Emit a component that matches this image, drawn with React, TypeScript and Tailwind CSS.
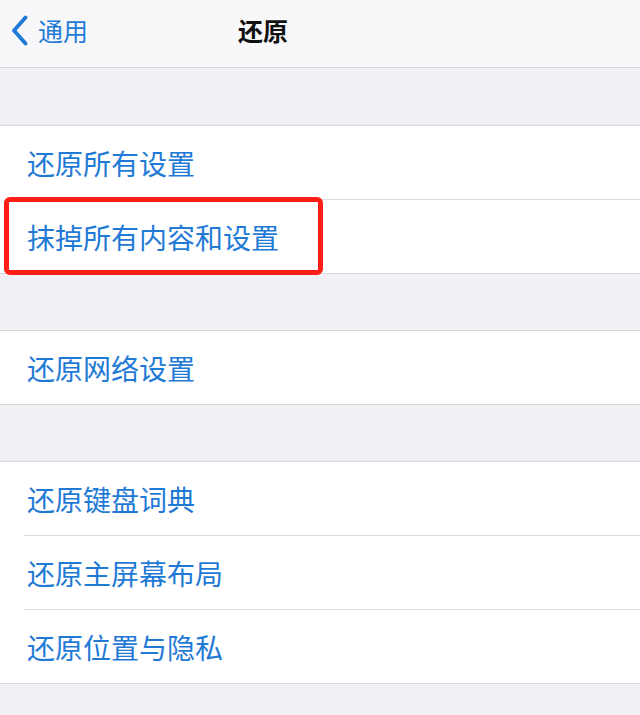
import React from 'react';

const groups: string[][] = [
  ['还原所有设置', '抹掉所有内容和设置'],
  ['还原网络设置'],
  ['还原键盘词典', '还原主屏幕布局', '还原位置与隐私'],
];

const Row = ({ label, marked }: { label: string; marked?: boolean }) => (
  <div className="relative h-[73px] flex items-center pl-[27px] text-[28px] text-[#1f7ad6] leading-none">
    <span>{label}</span>
    {marked && (
      <div className="absolute left-[4px] top-[-3px] w-[319px] h-[78px] border-[5px] border-[#ff1d17] rounded-[6px]" />
    )}
  </div>
);

export default function App() {
  return (
    <div
      className="w-[640px] h-[715px] overflow-hidden bg-[#f0f0f5]"
      style={{ fontFamily: '"Noto Sans CJK SC", "Noto Sans", sans-serif' }}
    >
      {/* Nav bar */}
      <div className="h-[68px] bg-[#f8f8fa] border-b border-[#d6d6da] flex items-center pb-[6px]">
        <div className="w-[238px] flex items-center pl-[11px] gap-[10px] text-[#1f7ad6]">
          <svg width="17" height="31" viewBox="0 0 17 31" fill="none">
            <path d="M14.5 2.5 L3 15.5 L14.5 28.5" stroke="currentColor" strokeWidth="3.8" strokeLinecap="round" strokeLinejoin="round" />
          </svg>
          <span className="text-[25px] leading-none">通用</span>
        </div>
        <div className="text-[25px] font-bold text-[#111] leading-none">还原</div>
      </div>

      <div className="flex flex-col gap-[56px] pt-[57px]">
        {groups.map((items, gi) => (
          <div key={gi} className="bg-white border-y border-[#d8d8dc]">
            {items.map((label, i) => (
              <React.Fragment key={label}>
                {i > 0 && <div className="ml-[24px] h-px bg-[#dcdce0]" />}
                <Row label={label} marked={gi === 0 && i === 1} />
              </React.Fragment>
            ))}
          </div>
        ))}
      </div>
    </div>
  );
}
